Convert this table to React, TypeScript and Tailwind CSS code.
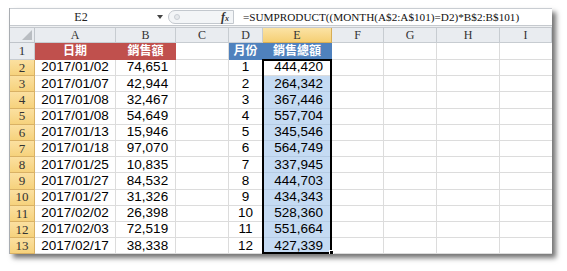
import React from "react";

const dates = [
  "2017/01/02", "2017/01/07", "2017/01/08", "2017/01/08", "2017/01/13", "2017/01/18",
  "2017/01/25", "2017/01/27", "2017/01/27", "2017/02/02", "2017/02/03", "2017/02/17",
];
const sales = [
  "74,651", "42,944", "32,467", "54,649", "15,946", "97,070",
  "10,835", "84,532", "31,326", "26,398", "72,519", "38,338",
];
const totals = [
  "444,420", "264,342", "367,446", "557,704", "345,546", "564,749",
  "337,945", "444,703", "434,343", "528,360", "551,664", "427,339",
];

const cols = ["A", "B", "C", "D", "E", "F", "G", "H", "I"];

const serif = { fontFamily: "'Liberation Serif', 'Noto Sans CJK TC', serif" };
const sans = { fontFamily: "'Liberation Sans', 'Noto Sans CJK TC', sans-serif" };

export default function App() {
  return (
    <div className="w-[567px] h-[271px] bg-white pl-[9px] pt-[8px] overflow-hidden">
      <div className="relative w-[543px] h-[246px] bg-white border-l border-[#a9adb2] shadow-[4px_4px_5px_rgba(0,0,0,0.55)] overflow-hidden">
        {/* Formula bar */}
        <div className="flex h-[17px] border-t border-[#c9cdd2] items-stretch" style={serif}>
          <div className="w-[142px] flex items-center justify-center text-[12px] text-[#222]">E2</div>
          <div className="w-[16px] flex items-center justify-center">
            <div className="w-0 h-0 border-l-[3px] border-r-[3px] border-t-[4px] border-l-transparent border-r-transparent border-t-[#444]" />
          </div>
          <div className="w-[66px] my-[1px] flex items-center justify-between rounded-l-full border border-[#c3c8ce] bg-[#f3f5f7] pl-[5px] pr-[4px]">
            <div className="w-[6px] h-[6px] rounded-full border border-[#c9ced4] bg-[#e6e9ec]" />
            <span className="text-[12px] italic font-bold text-[#333] leading-none">
              f<span className="text-[8px]">x</span>
            </span>
          </div>
          <div className="flex-1 flex items-center pl-[9px] text-[11.2px] text-[#111] whitespace-nowrap">
            =SUMPRODUCT((MONTH(A$2:A$101)=D2)*B$2:B$101)
          </div>
        </div>
        <div className="h-[3px] bg-[#eef0f2] border-t border-b border-[#c5c9ce]" />

        {/* Grid */}
        <div className="grid grid-cols-[25px_81px_60px_53px_34px_69px_52px_53px_63px_1fr] grid-rows-[15px_17px_repeat(12,16.2px)]">
          {/* Column headers */}
          <div className="flex items-end justify-end p-[2px] bg-[#e9ecf0] border-r border-b border-[#bfc4ca]">
            <svg width="10" height="10" viewBox="0 0 10 10">
              <polygon points="10,0 10,10 0,10" fill="#b9bdc2" />
            </svg>
          </div>
          {cols.map((c) => (
            <div
              key={c}
              className={
                c === "E"
                  ? "flex items-center justify-center bg-gradient-to-b from-[#fbe3a5] to-[#f5cf73] border-r border-b border-[#d7ad55] text-[12px] text-[#333]"
                  : "flex items-center justify-center bg-[#e9ecf0] border-r border-b border-[#c7ccd1] text-[12px] text-[#333]"
              }
              style={serif}
            >
              {c}
            </div>
          ))}

          {/* Row 1 */}
          <div className="flex items-center justify-center bg-[#e9ecf0] border-r border-b border-[#c7ccd1] text-[13px] text-[#333]" style={serif}>
            1
          </div>
          <div className="flex items-center justify-center bg-[#c0504d] border-r border-b border-[#c0504d] text-[12px] font-bold text-white" style={sans}>日期</div>
          <div className="flex items-center justify-center bg-[#c0504d] border-r border-b border-[#c0504d] text-[12px] font-bold text-white" style={sans}>銷售額</div>
          <div className="border-r border-b border-[#dcdcdc]" />
          <div className="flex items-center justify-center bg-[#4f81bd] border-r border-b border-[#4f81bd] text-[12px] font-bold text-white" style={sans}>月份</div>
          <div className="flex items-center justify-center bg-[#4f81bd] border-r border-b border-[#4f81bd] text-[12px] font-bold text-white" style={sans}>銷售總額</div>
          <div className="border-r border-b border-[#dcdcdc]" />
          <div className="border-r border-b border-[#dcdcdc]" />
          <div className="border-r border-b border-[#dcdcdc]" />
          <div className="border-b border-[#dcdcdc]" />

          {/* Data rows */}
          {dates.map((d, i) => (
            <React.Fragment key={i}>
              <div className="flex items-center justify-center bg-gradient-to-b from-[#fbe0a0] to-[#f6d27c] border-r border-b border-[#d9b164] text-[13px] text-[#333]" style={serif}>
                {i + 2}
              </div>
              <div className="flex items-center justify-center border-r border-b border-[#dcdcdc] text-[13.5px] text-black" style={sans}>{d}</div>
              <div className="flex items-center justify-center pl-[4px] border-r border-b border-[#dcdcdc] text-[13.5px] text-black" style={sans}>{sales[i]}</div>
              <div className="border-r border-b border-[#dcdcdc]" />
              <div className="flex items-center justify-center border-r border-b border-[#dcdcdc] text-[13.5px] text-black" style={sans}>{i + 1}</div>
              <div
                className={
                  i === 0
                    ? "flex items-center justify-end pr-[8px] bg-white border-r border-b border-[#dcdcdc] text-[13.5px] text-black"
                    : "flex items-center justify-end pr-[8px] bg-[#c5dbf3] border-r border-b border-[#b5cbe3] text-[13.5px] text-black"
                }
                style={sans}
              >
                {totals[i]}
              </div>
              <div className="border-r border-b border-[#dcdcdc]" />
              <div className="border-r border-b border-[#dcdcdc]" />
              <div className="border-r border-b border-[#dcdcdc]" />
              <div className="border-b border-[#dcdcdc]" />
            </React.Fragment>
          ))}
        </div>

        {/* Selection border E2:E13 */}
        <div className="absolute left-[252px] top-[51px] w-[70px] h-[195px] border-2 border-black pointer-events-none" />
        <div className="absolute left-[319px] top-[242px] w-[5px] h-[5px] bg-black border border-white pointer-events-none" />
      </div>
    </div>
  );
}
